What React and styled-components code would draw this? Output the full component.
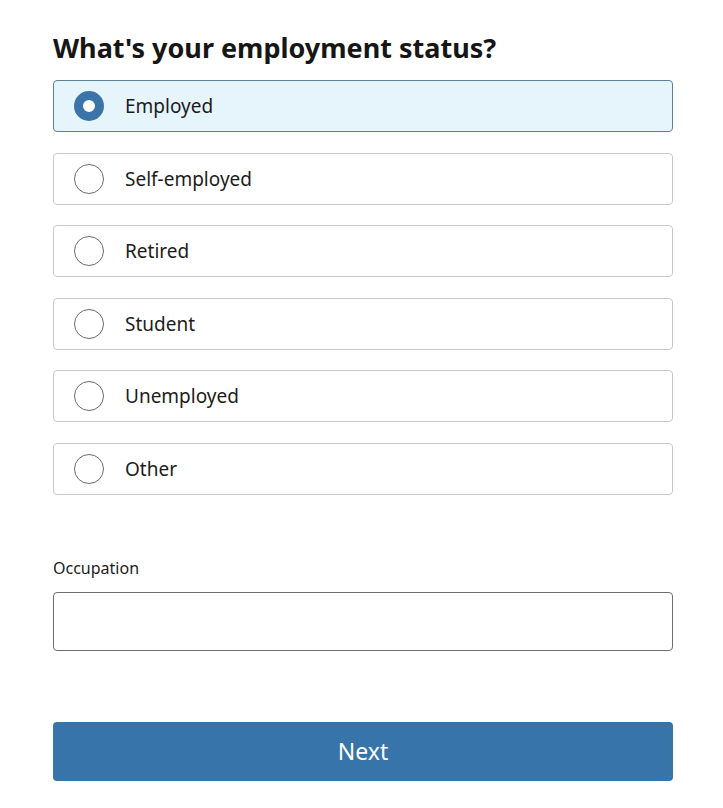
import styled, { createGlobalStyle } from "styled-components";
import { useState } from "react";

const GlobalStyle = createGlobalStyle`
  body {
    margin: 0;
    background: #fff;
    font-family: "Noto Sans", "Open Sans", sans-serif;
    color: #1a1a1a;
  }
`;

const Page = styled.div`
  padding: 28px 50px 0 53px;
  display: flex;
  flex-direction: column;
`;

const Title = styled.h1`
  font-size: 27px;
  font-weight: 700;
  margin: 0 0 12px;
  line-height: 40px;
  color: #161616;
`;

const Options = styled.div`
  display: flex;
  flex-direction: column;
  gap: 20.5px;
`;

const Option = styled.label`
  display: flex;
  align-items: center;
  gap: 21px;
  height: 52px;
  box-sizing: border-box;
  padding: 0 20px;
  border: 1px solid ${(p) => (p.$checked ? "#5b8299" : "#c9c9c9")};
  background: ${(p) => (p.$checked ? "#e6f4fc" : "#fff")};
  border-radius: 4px;
  cursor: pointer;
  font-size: 19px;
  color: #1c1c1c;
`;

const Radio = styled.span`
  width: 30px;
  height: 30px;
  box-sizing: border-box;
  border-radius: 50%;
  flex-shrink: 0;
  border: ${(p) => (p.$checked ? "9px solid #3a74a8" : "1.5px solid #6b6b6b")};
  background: #fff;
`;

const Field = styled.div`
  margin-top: 62px;
  display: flex;
  flex-direction: column;
`;

const Label = styled.label`
  font-size: 16px;
  color: #1c1c1c;
  margin-bottom: 13px;
`;

const Input = styled.input`
  height: 59px;
  box-sizing: border-box;
  border: 1px solid #6e6e6e;
  border-radius: 4px;
  font-size: 18px;
  padding: 0 14px;
  font-family: inherit;
`;

const NextButton = styled.button`
  margin-top: 71px;
  height: 59px;
  border: none;
  border-radius: 4px;
  background: #3674aa;
  color: #fff;
  font-family: inherit;
  font-size: 23px;
  cursor: pointer;
`;

const choices = ["Employed", "Self-employed", "Retired", "Student", "Unemployed", "Other"];

const App = () => {
  const [status, setStatus] = useState("Employed");

  return (
    <Page>
      <GlobalStyle />
      <Title>What's your employment status?</Title>
      <Options>
        {choices.map((c) => (
          <Option key={c} $checked={status === c} onClick={() => setStatus(c)}>
            <Radio $checked={status === c} />
            {c}
          </Option>
        ))}
      </Options>
      <Field>
        <Label htmlFor="occupation">Occupation</Label>
        <Input id="occupation" />
      </Field>
      <NextButton>Next</NextButton>
    </Page>
  );
};

export default App;
